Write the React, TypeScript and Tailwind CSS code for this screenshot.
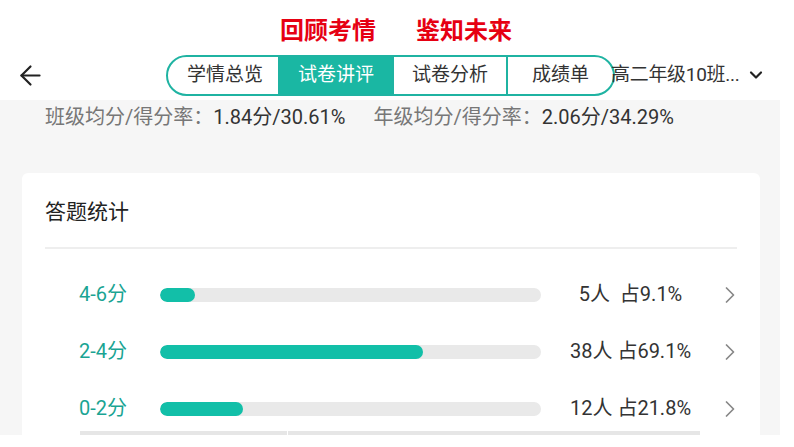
import React from 'react'
import { ArrowLeft, ChevronDown, ChevronRight } from 'lucide-react'

const tabs = ['学情总览', '试卷讲评', '试卷分析', '成绩单']

const rows = [
    { label: '4-6分', pct: 9.1, text: '5人  占9.1%' },
    { label: '2-4分', pct: 69.1, text: '38人 占69.1%' },
    { label: '0-2分', pct: 21.8, text: '12人 占21.8%' },
]

export default function App() {
    return (
        <div className="w-[794px] h-[447px] bg-white overflow-hidden" style={{ fontFamily: 'Roboto, "Noto Sans CJK SC", sans-serif' }}>
            <div className="w-[780px]">
                {/* header */}
                <div className="h-[100px] bg-white flex flex-col">
                    <div className="pt-[17px] h-[54px] flex justify-center gap-[40px] text-[24px] leading-[28px] font-bold text-[#e60012]">
                        <span className="ml-[12px]">回顾考情</span>
                        <span>鉴知未来</span>
                    </div>
                    <div className="h-[42px] flex items-center">
                        <ArrowLeft className="ml-[15px] w-[31px] h-[31px] text-[#222] shrink-0" strokeWidth={1.7} />
                        <div className="ml-[120px] flex h-[41px] border-2 border-[#1fb3a2] rounded-full overflow-hidden shrink-0">
                            {tabs.map((t, i) => (
                                <div key={t} className={`flex items-center justify-center text-[19px] ${i === 0 ? 'w-[110px] pl-[4px]' : i === 3 ? 'w-[107px]' : 'w-[114px]'} ${i > 0 ? 'border-l-2 border-[#1fb3a2]' : ''} ${i === 1 ? 'bg-[#1ab7a3] text-white' : 'text-[#333]'}`}>
                                    {t}
                                </div>
                            ))}
                        </div>
                        <span className="-ml-[4px] text-[19px] text-[#333] whitespace-nowrap tracking-[-0.3px]">高二年级10班...</span>
                        <ChevronDown className="ml-[7px] w-[20px] h-[20px] text-[#222] shrink-0" strokeWidth={2.6} />
                    </div>
                </div>

                {/* gray body */}
                <div className="h-[335px] bg-[#f6f6f6] overflow-hidden pl-[22px] pr-[20px]">
                    <div className="pt-[4px] h-[73px] pl-[23px] flex text-[20px] leading-[26px] whitespace-nowrap">
                        <span className="text-[#777]">班级均分/得分率：</span>
                        <span className="text-[#333]">1.84分/30.61%</span>
                        <span className="ml-[28px] text-[#777]">年级均分/得分率：</span>
                        <span className="text-[#333]">2.06分/34.29%</span>
                    </div>
                    <div className="bg-white rounded-[6px] h-[300px] px-[23px]">
                        <div className="pt-[26px] text-[21px] leading-[26px] text-[#222]">答题统计</div>
                        <div className="mt-[22px] h-[2px] bg-[#eeeeee]" />
                        <div className="pt-[33px] flex flex-col gap-[32px]">
                            {rows.map(r => (
                                <div key={r.label} className="h-[25px] flex items-center">
                                    <span className="ml-[34px] w-[81px] shrink-0 text-[20px] leading-[25px] text-[#1aa493]">{r.label}</span>
                                    <div className="w-[381px] shrink-0 h-[14px] rounded-full bg-[#e9e9e9] overflow-hidden">
                                        <div className="h-full rounded-full bg-[#12bfa8]" style={{ width: `${r.pct}%` }} />
                                    </div>
                                    <span className="w-[179px] shrink-0 text-center text-[20px] leading-[25px] text-[#333] whitespace-pre">{r.text}</span>
                                    <ChevronRight className="ml-[-4px] w-[28px] h-[28px] shrink-0 text-[#888]" strokeWidth={1.5} />
                                </div>
                            ))}
                        </div>
                        <div className="mt-[10px] ml-[35px] w-[620px] h-[6px] flex">
                            <div className="w-[207px] bg-[#e6e6e6]" />
                            <div className="w-[1px] bg-white" />
                            <div className="flex-1 bg-[#e6e6e6]" />
                        </div>
                    </div>
                </div>
            </div>
        </div>
    )
}
